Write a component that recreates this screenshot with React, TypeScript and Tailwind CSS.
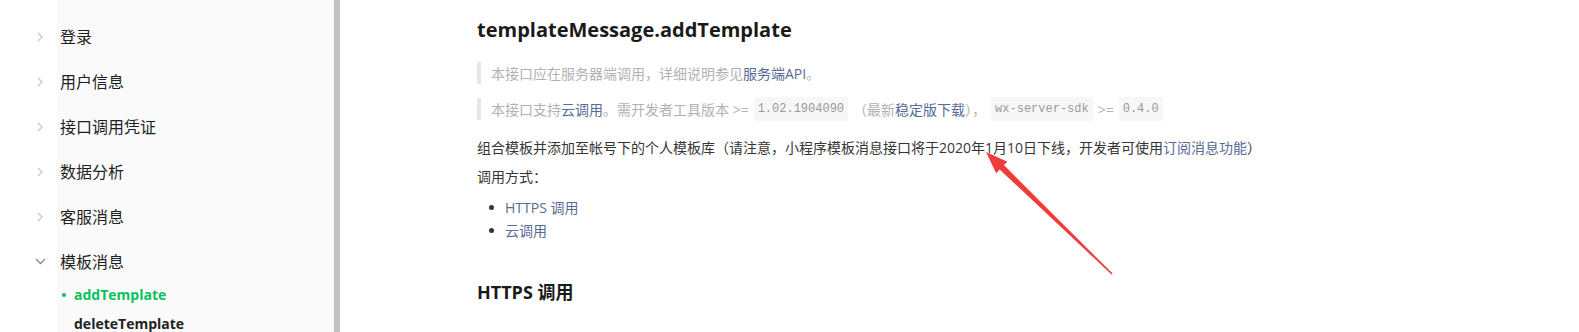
import React from "react";

const FONT = "font-['Open_Sans','Noto_Sans_CJK_SC',sans-serif]";

const sideItems = ["登录", "用户信息", "接口调用凭证", "数据分析", "客服消息"];

function ChevronRight() {
  return (
    <svg width="6" height="10" viewBox="0 0 6 10" fill="none" stroke="#c7c7c7" strokeWidth="1.3">
      <polyline points="1,1 5,5 1,9" />
    </svg>
  );
}

function ChevronDown() {
  return (
    <svg width="11" height="7" viewBox="0 0 11 7" fill="none" stroke="#8a8a8a" strokeWidth="1.3">
      <polyline points="1,1 5.5,5.5 10,1" />
    </svg>
  );
}

function Sidebar() {
  return (
    <aside className="w-[334px] shrink-0 h-full bg-[linear-gradient(to_right,#ffffff_57px,#fafafa_57px)]">
      <ul className="pt-[14px]">
        {sideItems.map((t) => (
          <li key={t} className="h-[45px] flex items-center pl-[37px]">
            <span className="w-[23px] flex items-center">
              <ChevronRight />
            </span>
            <span className="text-[16px] text-[#1f1f1f]">{t}</span>
          </li>
        ))}
        <li className="h-[45px] flex items-center pl-[35px]">
          <span className="w-[25px] flex items-center">
            <ChevronDown />
          </span>
          <span className="text-[16px] text-[#1f1f1f]">模板消息</span>
        </li>
      </ul>
      <ul className="-mt-[4px]">
        <li className="h-[29px] flex items-center pl-[62px] gap-[8px]">
          <span className="w-[4px] h-[4px] rounded-full bg-[#07c160]" />
          <span className="text-[14px] font-bold text-[#07c160]">addTemplate</span>
        </li>
        <li className="h-[29px] flex items-center pl-[74px]">
          <span className="text-[14px] font-bold text-[#222]">deleteTemplate</span>
        </li>
      </ul>
    </aside>
  );
}

function Code({ children }: { children: React.ReactNode }) {
  return (
    <code className="mx-[5px] px-[4px] py-[3px] bg-[#f7f7f7] rounded-[2px] text-[12px] text-[#9a9a9a] font-['Liberation_Mono',monospace]">
      {children}
    </code>
  );
}

function A({ children }: { children: React.ReactNode }) {
  return <a className="text-[#576b95]">{children}</a>;
}

function Main() {
  return (
    <main className="flex-1 pl-[137px] pt-[15px]">
      <h1 className="text-[20px] leading-[30px] font-bold text-[#1a1a1a]">templateMessage.addTemplate</h1>
      <blockquote className="mt-[17px] border-l-4 border-[#e6e6e6] pl-[10px] h-[22px] flex items-center text-[14px] text-[#b2b2b2]">
        本接口应在服务器端调用，详细说明参见<A>服务端API</A>。
      </blockquote>
      <blockquote className="mt-[14px] border-l-4 border-[#e6e6e6] pl-[10px] h-[22px] flex items-center text-[14px] text-[#b2b2b2] whitespace-pre">
        本接口支持<A>云调用</A>。需开发者工具版本 &gt;=<Code>1.02.1904090</Code>（最新<A>稳定版下载</A>），<Code>wx-server-sdk</Code>&gt;=<Code>0.4.0</Code>
      </blockquote>
      <p className="mt-[16px] text-[14px] leading-[24px] text-[#353535]">
        组合模板并添加至帐号下的个人模板库（请注意，小程序模板消息接口将于2020年1月10日下线，开发者可使用<A>订阅消息功能</A>）
      </p>
      <p className="mt-[5px] text-[14px] leading-[24px] text-[#353535]">调用方式：</p>
      <ul className="mt-[7px]">
        {["HTTPS 调用", "云调用"].map((t) => (
          <li key={t} className="h-[23px] flex items-center pl-[12px] gap-[11px] text-[14px]">
            <span className="w-[5px] h-[5px] rounded-full bg-[#333]" />
            <A>{t}</A>
          </li>
        ))}
      </ul>
      <h2 className="mt-[36px] text-[18px] leading-[28px] font-bold text-[#1a1a1a]">HTTPS 调用</h2>
    </main>
  );
}

export default function App() {
  return (
    <div className={`relative w-[1579px] h-[332px] overflow-hidden bg-white flex ${FONT}`}>
      <Sidebar />
      <div className="w-[6px] shrink-0 h-full bg-[#c1c1c1]" />
      <Main />
      <svg className="absolute left-0 top-0 pointer-events-none" width="1579" height="332">
        <polygon
          points="986,152 1007.4,161.8 1003.9,165.1 1112.6,273.6 1111.6,274.6 999.7,169.5 996.2,173.3"
          fill="#f23b3b"
        />
      </svg>
    </div>
  );
}
